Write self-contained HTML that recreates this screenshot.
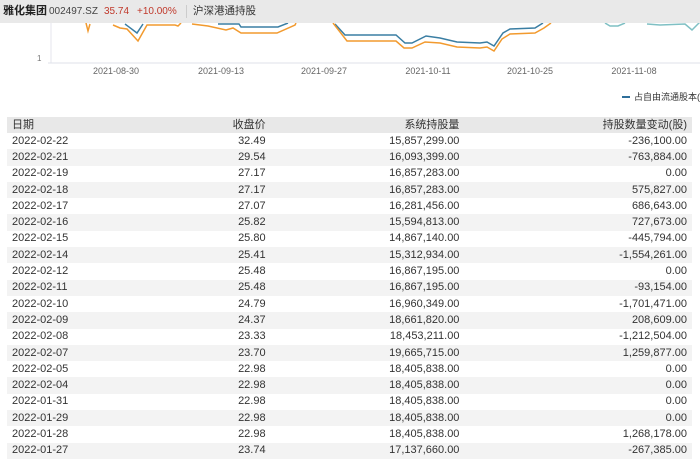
<!DOCTYPE html>
<html><head><meta charset="utf-8"><style>
*{margin:0;padding:0;box-sizing:border-box}
body{width:700px;height:459px;overflow:hidden;background:#fff;font-family:"Liberation Sans","Noto Sans CJK SC",sans-serif;position:relative;color:#333}
.hdr{position:absolute;left:0;top:0;width:700px;height:23px;background:#e9e9e9;font-size:10px;line-height:23px;white-space:nowrap}
.hdr span{position:absolute;top:0}
.dl{position:absolute;top:66px;font-size:9px;color:#666;transform:translateX(-50%)}
table{position:absolute;left:7px;top:117px;width:685px;border-collapse:collapse;font-size:11px;line-height:13px}
th,td{height:16.3px;padding:0 5px;white-space:nowrap;font-weight:normal}
th{background:#e8e8e8;height:16px}
tr:nth-child(odd) td{background:#f3f3f3}
.r{text-align:right}
</style></head><body>
<div class="hdr">
<span style="left:3px;font-weight:bold;font-size:11px;color:#222">雅化集团</span>
<span style="left:49px;color:#444">002497.SZ</span>
<span style="left:104px;color:#c0392b">35.74</span>
<span style="left:137px;color:#c0392b">+10.00%</span>
<span style="left:186px;top:5px;width:1px;height:13px;background:#ccc"></span>
<span style="left:193px;color:#333;font-size:10.5px">沪深港通持股</span>
</div>
<svg style="position:absolute;left:0;top:23px" width="700" height="45" viewBox="0 23 700 45">
<line x1="51" y1="23" x2="51" y2="63" stroke="#e4e4ee"/>
<line x1="48" y1="63" x2="700" y2="63" stroke="#dfe2ea"/>
<text x="37" y="61" font-size="8" fill="#777" font-family="Liberation Sans">1</text>
<g fill="none" stroke-width="1.5">
<polyline stroke="#3a7ea3" points="125,24 137,33 143,24"/>
<polyline stroke="#f29a2e" points="86,23 88,31 90,24"/>
<polyline stroke="#f29a2e" points="113,25 120,28 127,29 138,41 147,25 175,25 178,26 181,23"/>
<polyline stroke="#3a7ea3" points="218,24 239,24 241,27 278,27 288,23"/>
<polyline stroke="#f29a2e" points="192,24 208,26 226,30 233,28 241,33 277,33 295,25 296,23"/>
<polyline stroke="#3a7ea3" points="335,24 345,35 396,35 405,43 412,43 426,36 440,38 457,42 480,43 487,42 494,46 503,33 510,29 535,28 543,23"/>
<polyline stroke="#f29a2e" points="333,23 347,41 396,41 404,48 412,48 425,42 440,43 457,47 480,48 487,47 494,51 502,39 510,34 535,33 544,28 551,23"/>
<polyline stroke="#7fc0c4" points="605,23 610,26 618,26 625,23"/>
<polyline stroke="#7fc0c4" points="647,24 660,25 685,24 692,30 700,22"/>
</g>
</svg>
<div class="dl" style="left:116px">2021-08-30</div>
<div class="dl" style="left:221px">2021-09-13</div>
<div class="dl" style="left:324px">2021-09-27</div>
<div class="dl" style="left:428px">2021-10-11</div>
<div class="dl" style="left:530px">2021-10-25</div>
<div class="dl" style="left:634px">2021-11-08</div>
<div style="position:absolute;left:622px;top:96px;width:8px;height:1.5px;background:#2f6f9a"></div>
<div style="position:absolute;left:634px;top:90px;font-size:9px;color:#333;white-space:nowrap">占自由流通股本(%</div>
<table>
<tr><th style="text-align:left">日期</th><th class="r">收盘价</th><th class="r">系统持股量</th><th class="r">持股数量变动(股)</th></tr>
<tr><td>2022-02-22</td><td class="r">32.49</td><td class="r">15,857,299.00</td><td class="r">-236,100.00</td></tr>
<tr><td>2022-02-21</td><td class="r">29.54</td><td class="r">16,093,399.00</td><td class="r">-763,884.00</td></tr>
<tr><td>2022-02-19</td><td class="r">27.17</td><td class="r">16,857,283.00</td><td class="r">0.00</td></tr>
<tr><td>2022-02-18</td><td class="r">27.17</td><td class="r">16,857,283.00</td><td class="r">575,827.00</td></tr>
<tr><td>2022-02-17</td><td class="r">27.07</td><td class="r">16,281,456.00</td><td class="r">686,643.00</td></tr>
<tr><td>2022-02-16</td><td class="r">25.82</td><td class="r">15,594,813.00</td><td class="r">727,673.00</td></tr>
<tr><td>2022-02-15</td><td class="r">25.80</td><td class="r">14,867,140.00</td><td class="r">-445,794.00</td></tr>
<tr><td>2022-02-14</td><td class="r">25.41</td><td class="r">15,312,934.00</td><td class="r">-1,554,261.00</td></tr>
<tr><td>2022-02-12</td><td class="r">25.48</td><td class="r">16,867,195.00</td><td class="r">0.00</td></tr>
<tr><td>2022-02-11</td><td class="r">25.48</td><td class="r">16,867,195.00</td><td class="r">-93,154.00</td></tr>
<tr><td>2022-02-10</td><td class="r">24.79</td><td class="r">16,960,349.00</td><td class="r">-1,701,471.00</td></tr>
<tr><td>2022-02-09</td><td class="r">24.37</td><td class="r">18,661,820.00</td><td class="r">208,609.00</td></tr>
<tr><td>2022-02-08</td><td class="r">23.33</td><td class="r">18,453,211.00</td><td class="r">-1,212,504.00</td></tr>
<tr><td>2022-02-07</td><td class="r">23.70</td><td class="r">19,665,715.00</td><td class="r">1,259,877.00</td></tr>
<tr><td>2022-02-05</td><td class="r">22.98</td><td class="r">18,405,838.00</td><td class="r">0.00</td></tr>
<tr><td>2022-02-04</td><td class="r">22.98</td><td class="r">18,405,838.00</td><td class="r">0.00</td></tr>
<tr><td>2022-01-31</td><td class="r">22.98</td><td class="r">18,405,838.00</td><td class="r">0.00</td></tr>
<tr><td>2022-01-29</td><td class="r">22.98</td><td class="r">18,405,838.00</td><td class="r">0.00</td></tr>
<tr><td>2022-01-28</td><td class="r">22.98</td><td class="r">18,405,838.00</td><td class="r">1,268,178.00</td></tr>
<tr><td>2022-01-27</td><td class="r">23.74</td><td class="r">17,137,660.00</td><td class="r">-267,385.00</td></tr>
</table>
</body></html>
